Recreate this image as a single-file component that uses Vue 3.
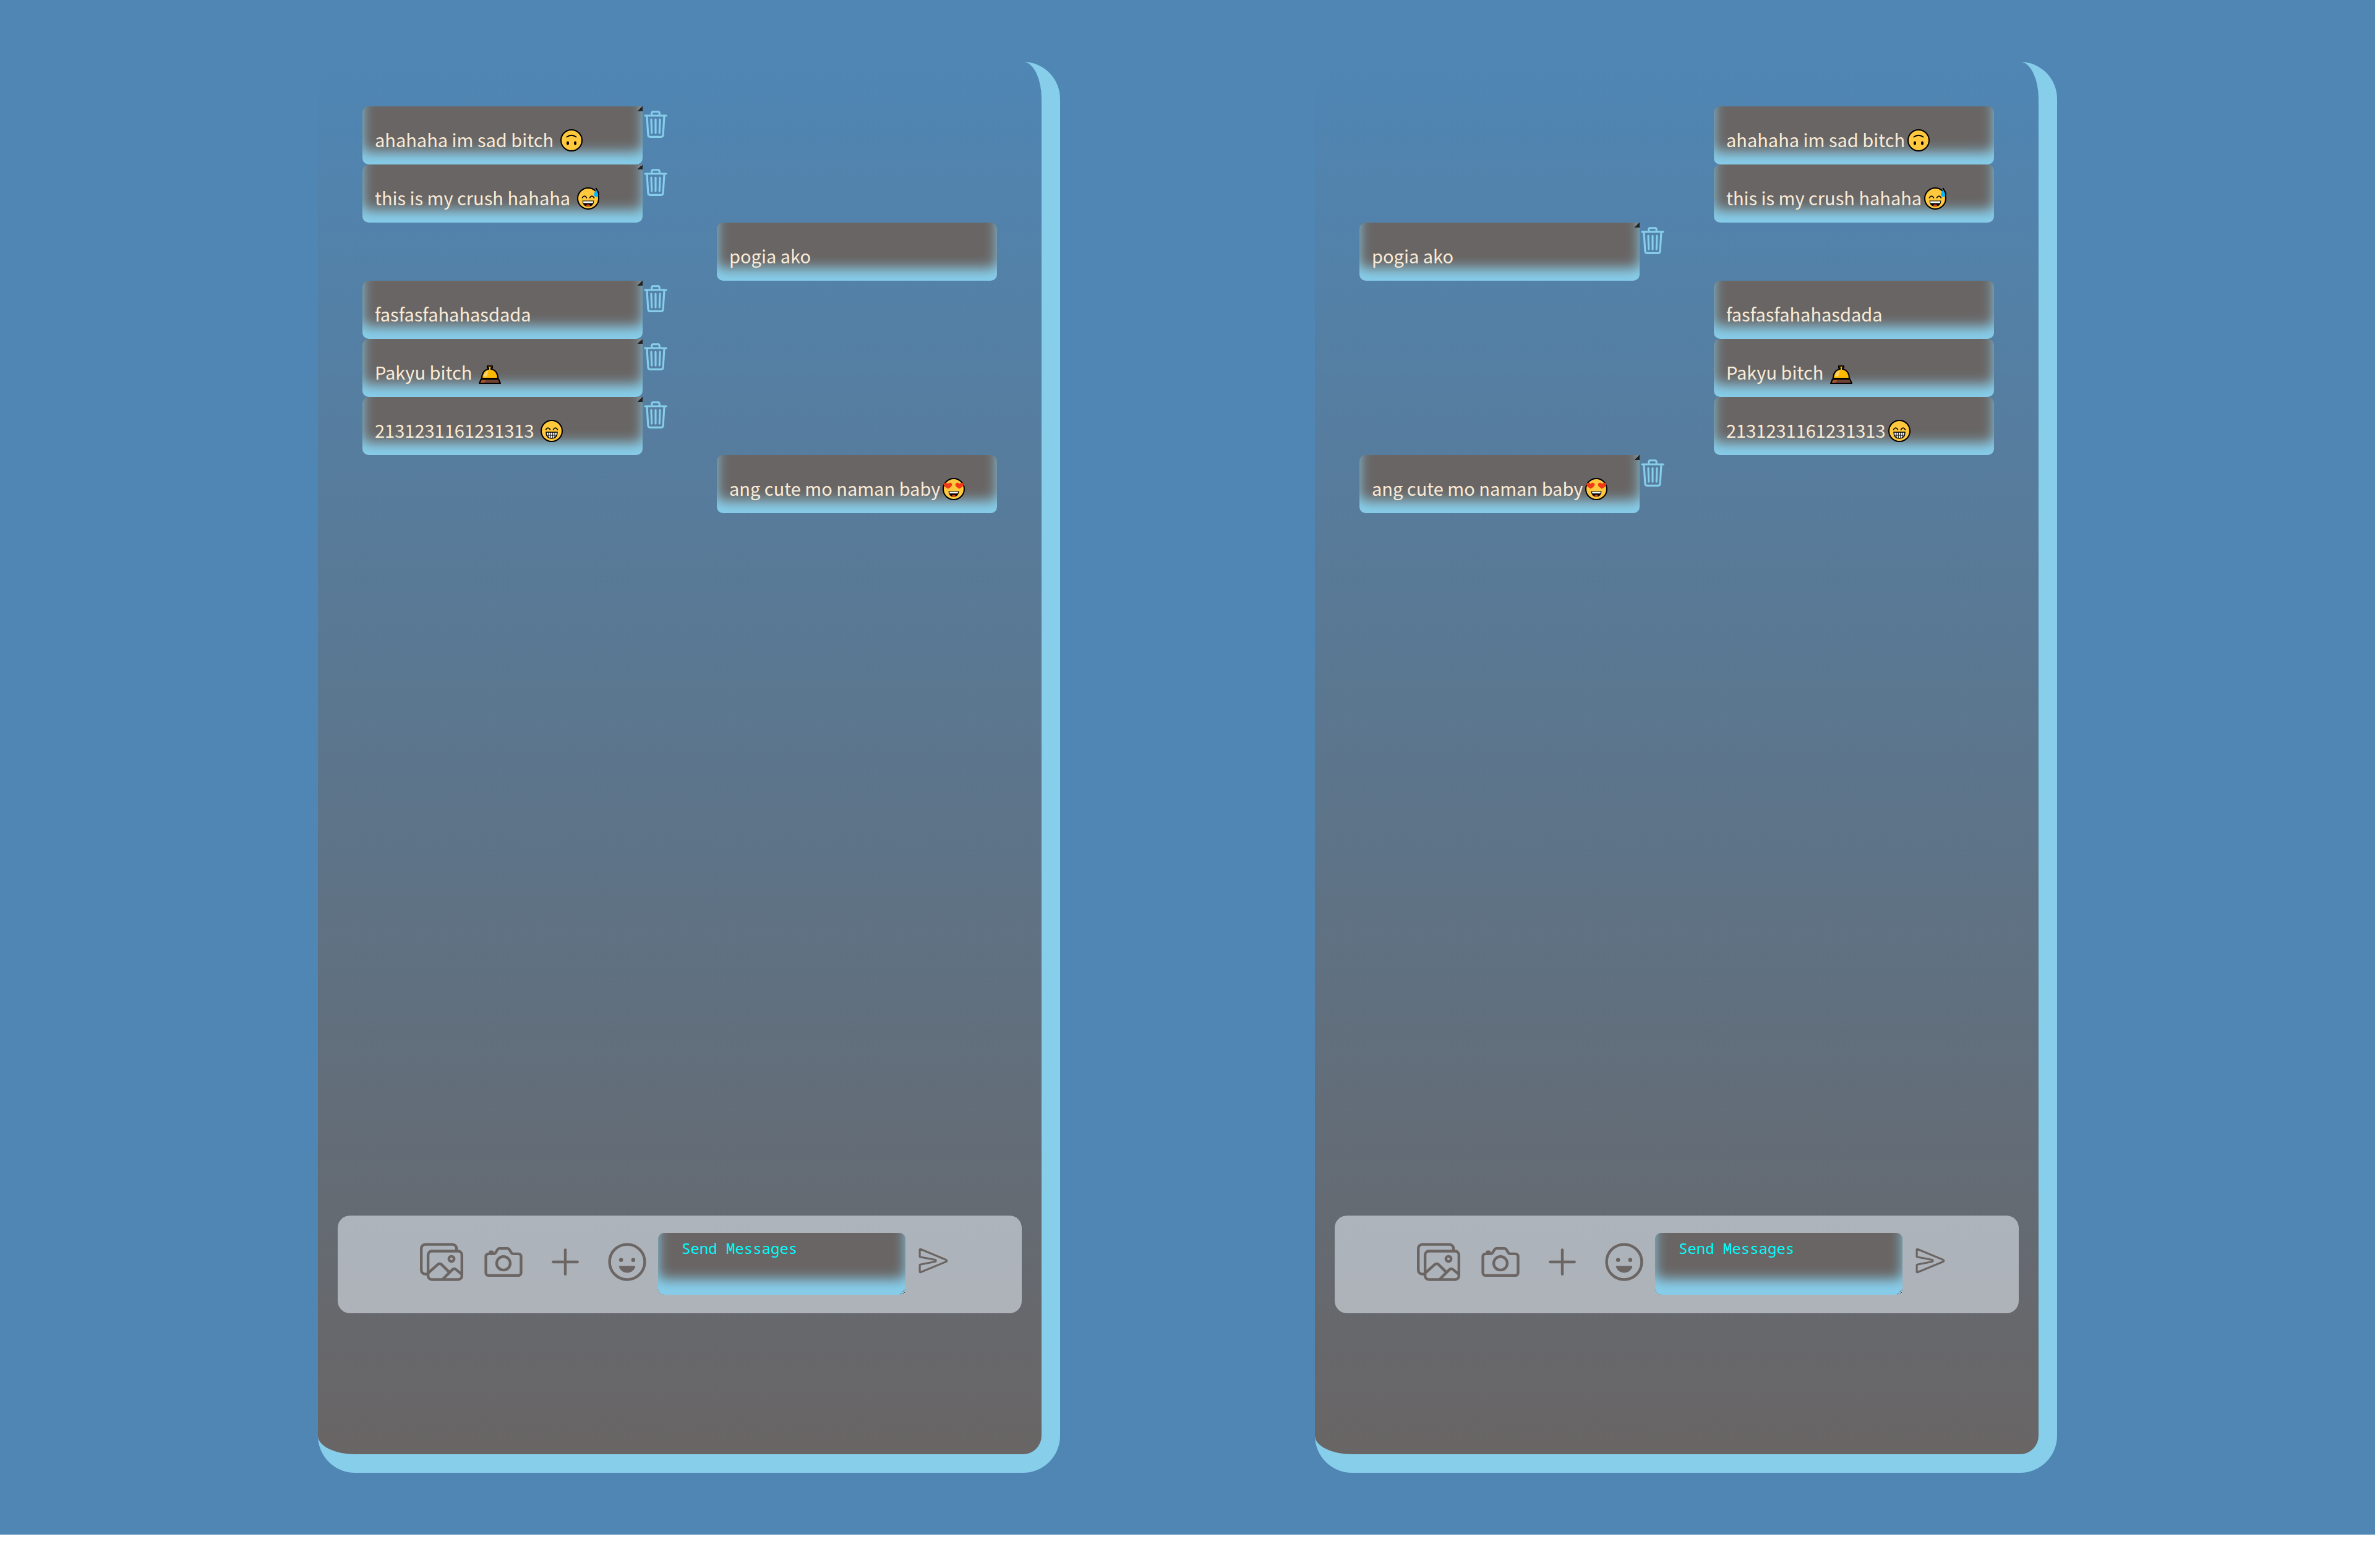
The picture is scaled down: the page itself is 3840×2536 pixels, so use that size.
<script setup>
import { ref } from 'vue'

const messages = [
  { id: 1, from: 'a', text: 'ahahaha im sad bitch', emoji: 'upside' },
  { id: 2, from: 'a', text: 'this is my crush hahaha', emoji: 'sweat' },
  { id: 3, from: 'b', text: 'pogia ako' },
  { id: 4, from: 'a', text: 'fasfasfahahasdada' },
  { id: 5, from: 'a', text: 'Pakyu bitch', emoji: 'bell', spaced: true },
  { id: 6, from: 'a', text: '2131231161231313', emoji: 'grin' },
  { id: 7, from: 'b', text: 'ang cute mo naman baby', emoji: 'hearts' },
]

const emojiNames = {
  upside: 'upside-down face',
  sweat: 'grinning face with sweat',
  bell: 'bellhop bell',
  grin: 'beaming face',
  hearts: 'smiling face with heart-eyes',
}

const panels = ['a', 'b']
const drafts = ref({ a: '', b: '' })

const label = (message, viewer) =>
  message.spaced || (viewer === 'a' && message.from === 'a')
    ? message.text + ' '
    : message.text
</script>

<template>
  <main class="page">
    <section v-for="viewer in panels" :key="viewer" class="panel">
      <ul class="messages">
        <li
          v-for="message in messages"
          :key="message.id"
          class="row"
          :class="{ theirs: message.from !== viewer }"
        >
          <p class="bubble">
            {{ label(message, viewer) }}<svg
              v-if="message.emoji"
              class="emoji"
              viewBox="0 0 36 36"
              role="img"
              :aria-label="emojiNames[message.emoji]"
            >
              <circle v-if="message.emoji !== 'bell'" cx="18" cy="18" r="17" fill="#ffc83d" stroke="#000" stroke-width="2" />
              <g v-if="message.emoji === 'upside'">
                <path d="M10.500 12.500Q18 7 25.500 12.500" fill="none" stroke="#000" stroke-width="2" stroke-linecap="round" />
                <ellipse cx="12" cy="22.500" rx="2" ry="3" />
                <ellipse cx="24" cy="22.500" rx="2" ry="3" />
              </g>
              <g v-else-if="message.emoji === 'sweat'">
                <path d="M8.500 17Q12 11 15.500 17M20.500 17Q24 11 27.500 17" fill="none" stroke="#000" stroke-width="1.500" stroke-linecap="round" />
                <path d="M8.500 21.500H27.500Q27 31 18 31T8.500 21.500Z" />
                <path d="M9.500 22.500H26.500L25.500 25.500H10.500Z" fill="#fff" />
                <ellipse cx="18" cy="29" rx="3" ry="1.500" fill="#f03a17" />
                <path d="M30.500 1C32 5 35.500 8 35.500 12" fill="none" stroke="#000" stroke-width="2" />
                <path d="M30.500 3.500C31.500 7 34 8.500 34 12A3.300 3.300 0 0 1 27.400 12C27.400 8.500 29.500 7 30.500 3.500Z" fill="#00b7ff" />
              </g>
              <g v-else-if="message.emoji === 'bell'">
                <path d="M14 7H22V10H20V12C27 13 31 19 31 27H5C5 19 9 13 16 12V10H14Z" fill="#ffb900" stroke="#000" stroke-width="2" stroke-linejoin="round" />
                <path d="M8 24C8.500 18 12 15 16 14L13 24Z" fill="#ffd56b" />
                <path d="M4 28H32L35 35H1Z" fill="#6d4232" stroke="#000" stroke-width="2" stroke-linejoin="round" />
                <path d="M5 29.500H12L9 34H3Z" fill="#a4552a" />
              </g>
              <g v-else-if="message.emoji === 'grin'">
                <path d="M8.500 16Q12 10 15.500 16M20.500 16Q24 10 27.500 16" fill="none" stroke="#000" stroke-width="1.500" stroke-linecap="round" />
                <path d="M9 20H27Q27 30 18 30T9 20Z" fill="#fff" stroke="#000" stroke-width="1.500" />
                <path d="M9.500 25H26.500M13 20V29M16.300 20V30M19.700 20V30M23 20V29" stroke="#000" stroke-width="1" />
              </g>
              <g v-else>
                <path d="M9 17.500C4.500 15 1.500 12.500 2 10C2.500 7.500 6.500 7 8.500 9.500C11 6.500 15 7.500 15.300 10.500C15.500 13.500 12 15.500 9 17.500Z" fill="#f03a17" />
                <path d="M27 17.500C31.500 15 34.500 12.500 34 10C33.500 7.500 29.500 7 27.500 9.500C25 6.500 21 7.500 20.700 10.500C20.500 13.500 24 15.500 27 17.500Z" fill="#f03a17" />
                <path d="M9.500 21.500H26.500Q26 30.500 18 30.500T9.500 21.500Z" />
                <path d="M11 22.500H25L24.500 25H11.500Z" fill="#fff" />
                <ellipse cx="18" cy="28.500" rx="2.800" ry="1.500" fill="#f03a17" />
              </g>
            </svg>
          </p>
          <button v-if="message.from === viewer" class="delete" type="button" aria-label="Delete message">
            <svg class="icon" viewBox="0 0 512 512">
              <path d="M112 112l20 320c.95 18.490 14.400 32 32 32H348c17.670 0 30.870-13.510 32-32l20-320M80 112H432M192 112V72a23.930 23.930 0 0 1 24-24h80a23.930 23.930 0 0 1 24 24v40M256 176V400M184 176l8 224M328 176l-8 224" />
            </svg>
          </button>
        </li>
      </ul>

      <form class="composer" @submit.prevent>
        <div class="tools">
          <button type="button" aria-label="Photos">
            <svg class="icon" viewBox="0 0 512 512">
              <path d="M432 112V96a48.140 48.140 0 0 0-48-48H64A48.140 48.140 0 0 0 16 96V352a48.140 48.140 0 0 0 48 48H80" />
              <rect x="96" y="128" width="400" height="336" rx="46" />
              <ellipse cx="373" cy="220" rx="31" ry="31" />
              <path d="M342.150 372.170L255 285.780a30.930 30.930 0 0 0-42.180-1.210L96 387.640M265.230 464L383.820 346.270a31 31 0 0 1 41.460-1.870L496 402.910" />
            </svg>
          </button>
          <button type="button" aria-label="Camera">
            <svg class="icon" viewBox="0 0 512 512">
              <path d="M350.540 148.680l-26.620-42.060C318.310 100.080 310.620 96 302 96H210c-8.620 0-16.310 4.080-21.920 10.620l-26.620 42.060C155.850 155.230 148.620 160 140 160H80a32 32 0 0 0-32 32V384a32 32 0 0 0 32 32H432a32 32 0 0 0 32-32V192a32 32 0 0 0-32-32H373C364.350 160 356.150 155.230 350.540 148.680Z" />
              <circle cx="256" cy="272" r="80" />
              <path d="M124 158V136H100V158" />
            </svg>
          </button>
          <button type="button" aria-label="Add">
            <svg class="icon" viewBox="0 0 512 512">
              <path d="M256 112V400M400 256H112" />
            </svg>
          </button>
          <button type="button" aria-label="Emoji">
            <svg class="icon" viewBox="0 0 512 512">
              <circle cx="256" cy="256" r="208" />
              <g class="solid">
                <circle cx="184" cy="232" r="24" />
                <circle cx="328" cy="232" r="24" />
                <path d="M256.050 384c-45.420 0-83.620-29.530-95.710-69.830A8 8 0 0 1 168.160 304H343.850a8 8 0 0 1 7.820 10.170C339.680 354.470 301.470 384 256.050 384Z" />
              </g>
            </svg>
          </button>
        </div>
        <textarea v-model="drafts[viewer]" class="field" placeholder="Send Messages" aria-label="Send Messages"></textarea>
        <button class="send" type="submit" aria-label="Send">
          <svg class="icon" viewBox="0 0 512 512">
            <path d="M470.300 271.150L43.160 447.310a7.830 7.830 0 0 1-11.160-7V327a8 8 0 0 1 6.510-7.860l247.620-47c17.360-3.290 17.360-28.150 0-31.440l-247.630-47a8 8 0 0 1-6.500-7.850V72.590c0-5.740 5.880-10.260 11.160-8L470.300 241.760A16 16 0 0 1 470.300 271.150Z" />
          </svg>
        </button>
      </form>
    </section>
  </main>
</template>

<style>
body {
  margin: 0;
  background: #fff;
}
</style>

<style scoped>
.page {
  display: flex;
  justify-content: center;
  gap: 412px;
  padding: 100px 0;
  background: #4f86b4;
  font-family: "Noto Sans CJK SC", sans-serif;
}

.panel {
  box-sizing: border-box;
  display: flex;
  flex-direction: column;
  flex: 0 1 1200px;
  min-height: 90vh;
  padding: 72px 32px 228px;
  border: 0 solid #87ceeb;
  border-width: 0 30px 30px 0;
  border-radius: 60px;
  background: linear-gradient(#4f86b4, #696565);
}

.messages {
  margin: 0;
  padding: 0 40px;
  list-style: none;
}

.row {
  display: flex;
  align-items: flex-start;
}

.theirs {
  justify-content: flex-end;
}

.bubble {
  position: relative;
  box-sizing: border-box;
  width: 453px;
  margin: 0;
  padding: 32px 20px 20px;
  border-radius: 10px;
  background: #696564;
  box-shadow: inset 0 -20px 20px #87ceeb;
  color: #faebd7;
  font-size: 29px;
  line-height: 42px;
}

.row:not(.theirs) .bubble::after {
  content: "";
  position: absolute;
  top: 0;
  right: 0;
  width: 8px;
  height: 8px;
  background: linear-gradient(135deg, #7b8385 50%, #222 50%);
}

.emoji {
  width: 36px;
  height: 36px;
  margin-left: 4px;
  vertical-align: -7px;
}

button {
  display: block;
  padding: 0;
  border: 0;
  background: none;
  color: #6b6563;
}

.icon {
  display: block;
  width: 100%;
  fill: none;
  stroke: currentColor;
  stroke-width: 32;
  stroke-linecap: round;
  stroke-linejoin: round;
}

.solid {
  fill: currentColor;
  stroke: none;
}

.delete {
  width: 50px;
  margin: 4px 0 0 -4px;
  color: #87ceeb;
}

.composer {
  display: flex;
  align-items: center;
  margin-top: auto;
  padding: 28px 0 30px 133px;
  border-radius: 20px;
  background: rgba(240, 248, 255, 0.52);
}

.tools {
  display: flex;
  gap: 30px;
  margin: 0 15px 6px 0;
}

.tools button {
  width: 70px;
}

.field {
  box-sizing: border-box;
  display: block;
  width: 400px;
  height: 100px;
  margin: 0;
  padding: 11px 38px;
  border: 0;
  border-radius: 10px;
  background: #696564;
  box-shadow: inset 0 -25px 20px #87ceeb;
  color: #0ff;
  font: 24px/28px "Noto Sans Mono", "DejaVu Sans Mono", monospace;
}

.field::placeholder {
  color: #0ff;
  opacity: 1;
}

.send {
  width: 50px;
  margin: 0 0 10px 20px;
}
</style>
